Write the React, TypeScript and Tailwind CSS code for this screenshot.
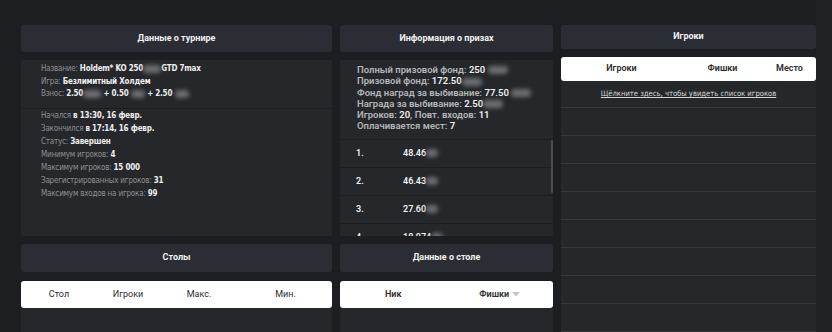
const font = { fontFamily: 'Roboto, "Liberation Sans", sans-serif' }
const narrow = { fontFamily: '"DejaVu Sans Condensed", Roboto, sans-serif' }

function Blur({ w = 'w-[24px]' }: { w?: string }) {
  return <span className={`inline-block h-[8px] ${w} align-middle rounded-sm bg-[#6b6d72] blur-[2px]`} />
}

function PanelHeader({ title, h = 'h-[27px]' }: { title: string; h?: string }) {
  return (
    <div className={`flex ${h} items-center justify-center rounded-[3px] bg-[#2a2d33] text-[9px] font-bold text-[#f1f1f1]`}>
      {title}
    </div>
  )
}

function Row({ label, children }: { label: string; children: React.ReactNode }) {
  return (
    <p>
      <span className="text-[#8e9095]">{label}</span> <span className="font-bold text-[#eeeeee]">{children}</span>
    </p>
  )
}

const places = [
  { n: '1.', v: '48.46' },
  { n: '2.', v: '46.43' },
  { n: '3.', v: '27.60' },
  { n: '4.', v: '18.974' },
]

export default function App() {
  return (
    <div style={font} className="flex h-[332px] w-[832px] overflow-hidden bg-[#1d1e21]">
      <div className="flex flex-1 gap-2 pl-[21px] pt-[25px]">
        {/* tournament column */}
        <div className="flex w-[311px] flex-col">
          <PanelHeader title="Данные о турнире" />
          <div style={narrow} className="mt-2 h-[176px] rounded-[2px] bg-[#26272b] text-[8px] tracking-[-0.2px]">
            <div className="px-5 pb-[7px] pt-[3px] leading-[12.5px]">
              <Row label="Название:">
                Holdem* KO 250<Blur w="w-[18px]" />GTD 7max
              </Row>
              <Row label="Игра:">Безлимитный Холдем</Row>
              <Row label="Взнос:">
                2.50<Blur w="w-[18px]" /> + 0.50 <Blur w="w-[14px]" /> + 2.50 <Blur w="w-[14px]" />
              </Row>
            </div>
            <div className="border-t border-[#1d1e21] px-5 leading-[13px]">
              <Row label="Начался">в 13:30, 16 февр.</Row>
              <Row label="Закончился">в 17:14, 16 февр.</Row>
              <Row label="Статус:">Завершен</Row>
              <Row label="Минимум игроков:">4</Row>
              <Row label="Максимум игроков:">15 000</Row>
              <Row label="Зарегистрированных игроков:">31</Row>
              <Row label="Максимум входов на игрока:">99</Row>
            </div>
          </div>
          <div className="mt-2">
            <PanelHeader title="Столы" h="h-[28px]" />
          </div>
          <div className="mt-[9px] grid h-[27px] grid-cols-[76px_62px_80px_1fr] items-center rounded-[3px] bg-white text-center text-[9px] text-[#2b2b2b]">
            <span>Стол</span>
            <span>Игроки</span>
            <span>Макс.</span>
            <span>Мин.</span>
          </div>
          <div className="flex-1 bg-[#26272b]" />
        </div>

        {/* prize column */}
        <div className="flex w-[213px] flex-col">
          <PanelHeader title="Информация о призах" />
          <div className="relative mt-2 h-[176px] overflow-hidden rounded-[2px] bg-[#26272b]">
            <div className="px-[17px] pt-[4px] text-[9.5px] font-semibold leading-[11.3px] text-[#b4b6ba]">
              <p>
                Полный призовой фонд: <span className="text-[#f1f1f1]">250</span> <Blur w="w-[20px]" />
              </p>
              <p>
                Призовой фонд: <span className="text-[#f1f1f1]">172.50</span>
                <Blur w="w-[20px]" />
              </p>
              <p>
                Фонд наград за выбивание: <span className="text-[#f1f1f1]">77.50</span> <Blur w="w-[20px]" />
              </p>
              <p>
                Награда за выбивание: <span className="text-[#f1f1f1]">2.50</span>
                <Blur w="w-[20px]" />
              </p>
              <p>
                Игроков: <span className="text-[#f1f1f1]">20</span>, Повт. входов: <span className="text-[#f1f1f1]">11</span>
              </p>
              <p>
                Оплачивается мест: <span className="text-[#f1f1f1]">7</span>
              </p>
            </div>
            <div className="mt-[7px] border-t border-[#1d1e21]">
              {places.map((p) => (
                <div
                  key={p.n}
                  className="flex h-[28px] items-center border-b border-[#1d1e21] pl-[16px] text-[9px] font-semibold text-[#f1f1f1]"
                >
                  <span className="w-[47px]">{p.n}</span>
                  <span>{p.v}</span>
                  <Blur w="w-[12px]" />
                </div>
              ))}
            </div>
            <div className="absolute right-0 top-[80px] h-[53px] w-[2px] rounded bg-[#4b4d52]" />
          </div>
          <div className="mt-2">
            <PanelHeader title="Данные о столе" h="h-[28px]" />
          </div>
          <div className="mt-[9px] grid h-[27px] grid-cols-2 items-center rounded-[3px] bg-white text-center text-[9px] font-semibold text-[#2b2b2b]">
            <span>Ник</span>
            <span className="flex items-center justify-center gap-[2px]">
              Фишки
              <svg width="8" height="5" viewBox="0 0 8 5" className="ml-[1px]">
                <path d="M0 0 L8 0 L4 4.5 Z" fill="#c4c4c4" />
              </svg>
            </span>
          </div>
          <div className="flex-1 bg-[#26272b]" />
        </div>

        {/* players column */}
        <div className="flex w-[255px] flex-col">
          <PanelHeader title="Игроки" />
          <div className="mt-2 grid h-[28px] grid-cols-[121px_81px_1fr] items-center rounded-[3px] bg-white text-center text-[9px] font-semibold text-[#2b2b2b]">
            <span>Игроки</span>
            <span>Фишки</span>
            <span>Место</span>
          </div>
          <div className="flex-1 bg-[#26272b]">
            <div
              style={narrow}
              className="flex h-[27px] items-center justify-center border-b border-[#35373b] text-[7.6px] text-[#d6d6d6] underline"
            >
              Щёлкните здесь, чтобы увидеть список игроков
            </div>
            {Array.from({ length: 8 }).map((_, i) => (
              <div key={i} className="h-[28px] border-b border-[#35373b]" />
            ))}
          </div>
        </div>
      </div>
      <div className="w-[16px] bg-[#212226]" />
    </div>
  )
}
